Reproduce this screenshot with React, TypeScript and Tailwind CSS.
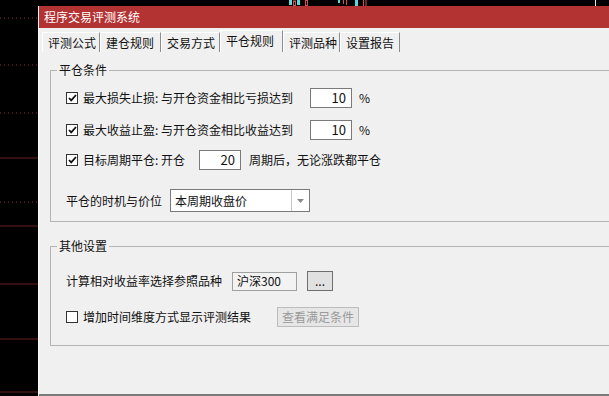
import React from "react";

const TABS = [
  { label: "评测公式", width: "w-[58px]" },
  { label: "建仓规则", width: "w-[61px]" },
  { label: "交易方式", width: "w-[59px]" },
  { label: "平仓规则", width: "w-[63px]", active: true },
  { label: "评测品种", width: "w-[57px]" },
  { label: "设置报告", width: "w-[60px]" },
];

export default function App() {
  return (
    <div className="relative h-[396px] w-[609px] overflow-hidden bg-black font-['Noto_Sans_CJK_SC','Microsoft_YaHei',sans-serif] text-[12px] text-[#111]">
      <ChartBackdrop />

      <div className="relative ml-[38px] mt-[6px] flex w-[600px] flex-col border-l border-[#fbfbfb]">
        <div className="flex h-[22px] items-center bg-[#b33232] pl-[5px] text-[12px] text-white">
          程序交易评测系统
        </div>

        <div className="flex h-[368px] flex-col border-b-2 border-[#7a7a7a] bg-[#f0f0f0]">
          <div className="flex h-[24px] items-end pl-[3px]">
            {TABS.map((tab) => (
              <div
                key={tab.label}
                className={`${tab.width} flex items-center border-l border-t border-r border-l-white border-t-white border-r-[#8c8c8c] pl-[5px] ${
                  tab.active ? "h-[22px] items-start pt-[1px]" : "h-[20px]"
                }`}
              >
                {tab.label}
              </div>
            ))}
          </div>

          <fieldset className="ml-[11px] mt-[10px] w-[580px] border border-[#b4b4b4] pb-[9px] pl-[15px] pt-[10px]">
            <legend className="-ml-[9px] px-[2px] leading-[16px]">平仓条件</legend>

            <div className="flex h-[20px] items-center">
              <CheckBox checked />
              <span className="ml-[5px] w-[227px]">最大损失止损: 与开仓资金相比亏损达到</span>
              <NumberBox value="10" />
              <span className="ml-[7px]">%</span>
            </div>

            <div className="mt-[12px] flex h-[20px] items-center">
              <CheckBox checked />
              <span className="ml-[5px] w-[227px]">最大收益止盈: 与开仓资金相比收益达到</span>
              <NumberBox value="10" />
              <span className="ml-[7px]">%</span>
            </div>

            <div className="mt-[10px] flex h-[20px] items-center">
              <CheckBox checked />
              <span className="ml-[5px] w-[116px]">目标周期平仓: 开仓</span>
              <NumberBox value="20" />
              <span className="ml-[8px]">周期后，无论涨跌都平仓</span>
            </div>

            <div className="mt-[19px] flex h-[23px] items-center">
              <span className="w-[104px]">平仓的时机与价位</span>
              <div className="flex h-[23px] w-[140px] border border-[#7a7a7a] bg-white">
                <div className="flex flex-1 items-center pl-[4px]">本周期收盘价</div>
                <div className="flex w-[18px] items-center justify-center border-l border-[#c8c8c8]">
                  <svg width="7" height="4" viewBox="0 0 7 4">
                    <path d="M0 0h7L3.5 4z" fill="#8a8a8a" />
                  </svg>
                </div>
              </div>
            </div>
          </fieldset>

          <fieldset className="ml-[11px] mt-[16px] w-[580px] border border-[#b4b4b4] pb-[18px] pl-[15px] pt-[17px]">
            <legend className="-ml-[9px] px-[2px] leading-[16px]">其他设置</legend>

            <div className="flex h-[20px] items-center">
              <span className="w-[166px]">计算相对收益率选择参照品种</span>
              <div className="flex h-[19px] w-[65px] items-center border border-[#a0a0a0] bg-[#f3f3f3] pl-[4px]">
                沪深300
              </div>
              <button className="ml-[10px] flex h-[20px] w-[26px] items-end justify-center border border-[#6f6f6f] bg-[#e1e1e1] pb-[3px] leading-none">
                ...
              </button>
            </div>

            <div className="mt-[16px] flex h-[20px] items-center">
              <CheckBox />
              <span className="ml-[5px] w-[194px]">增加时间维度方式显示评测结果</span>
              <button className="flex h-[20px] w-[82px] items-center justify-center border border-[#bcbcbc] bg-[#e6e6e6] text-[#9a9a9a]">
                查看满足条件
              </button>
            </div>
          </fieldset>
        </div>
      </div>
    </div>
  );
}

function CheckBox({ checked = false }: { checked?: boolean }) {
  return (
    <div className="flex h-[12px] w-[12px] shrink-0 items-center justify-center border border-[#333] bg-white">
      {checked && (
        <svg width="9" height="8" viewBox="0 0 9 8">
          <path d="M1 4l2.2 2.4L8 1" fill="none" stroke="#111" strokeWidth="1.8" />
        </svg>
      )}
    </div>
  );
}

function NumberBox({ value }: { value: string }) {
  return (
    <div className="flex h-[20px] w-[42px] items-center justify-end border border-[#7a7a7a] bg-white pr-[5px] text-[13px]">
      {value}
    </div>
  );
}

function ChartBackdrop() {
  const dotted = [18, 65, 113, 202];
  const solid = [158, 226, 284, 339, 392];
  return (
    <svg className="absolute inset-0" width="609" height="396" viewBox="0 0 609 396">
      {dotted.map((y) => (
        <line key={y} x1="0" y1={y} x2="38" y2={y} stroke="#8a2c2c" strokeDasharray="1 3" />
      ))}
      {solid.map((y) => (
        <line key={y} x1="0" y1={y} x2="38" y2={y} stroke="#6a1c1c" strokeWidth="1.2" />
      ))}
      <rect x="289" y="0" width="3" height="5" fill="#5ad8dc" />
      <rect x="293.5" y="1" width="2" height="5" fill="none" stroke="#d85050" strokeWidth="1" />
      <rect x="297" y="0" width="3" height="5" fill="#5ad8dc" />
      <rect x="305.5" y="0" width="2" height="6" fill="none" stroke="#d85050" strokeWidth="1" />
      <rect x="338" y="0" width="2" height="3" fill="#5ad8dc" />
      <path d="M343.5 0v4M346.5 0v5" stroke="#d85050" strokeWidth="1" />
      <rect x="355" y="0" width="3" height="6" fill="#5ad8dc" />
      <path d="M363.5 0v6M366 0v6" stroke="#d85050" strokeWidth="1" />
      <line x1="595.5" y1="0" x2="595.5" y2="6" stroke="#e8e8e8" />
    </svg>
  );
}
